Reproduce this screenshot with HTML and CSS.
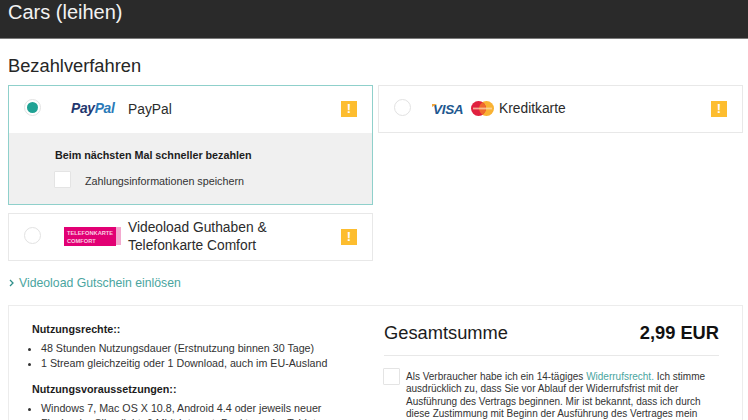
FILE: index.html
```html
<!DOCTYPE html>
<html lang="de">
<head>
<meta charset="utf-8">
<title>Cars (leihen)</title>
<link rel="stylesheet" href="styles.css">
</head>
<body>
<header class="top"><h1 class="top-title">Cars (leihen)</h1></header>
<main class="page">
  <h2 class="section-title">Bezahlverfahren</h2>
  <div class="methods">
    <div class="method-col">
      <section class="card card-active">
        <div class="row row-paypal">
          <span class="radio radio-on"></span>
          <span class="logo logo-paypal"><span class="pay">Pay</span><span class="pal">Pal</span></span>
          <span class="label">PayPal</span>
          <span class="warn">!</span>
        </div>
        <div class="extra">
          <div class="extra-title">Beim nächsten Mal schneller bezahlen</div>
          <label class="extra-check"><span class="check"></span><span class="extra-check-text">Zahlungsinformationen speichern</span></label>
        </div>
      </section>
      <section class="card">
        <div class="row row-tk">
          <span class="radio"></span>
          <span class="logo logo-tk">
            <span class="tk-back"></span>
            <span class="tk-front">TELEFONKARTE<br>COMFORT</span>
          </span>
          <span class="label">Videoload Guthaben &amp;<br>Telefonkarte Comfort</span>
          <span class="warn">!</span>
        </div>
      </section>
    </div>
    <div class="method-col">
      <section class="card">
        <div class="row row-card">
          <span class="radio"></span>
          <span class="logo logo-cards">
            <span class="visa">VISA</span>
            <svg class="mc" width="23" height="15" viewBox="0 0 23 15" aria-hidden="true">
              <circle cx="15.5" cy="7.5" r="7.5" fill="#f9b233"/>
              <circle cx="7.5" cy="7.5" r="7.5" fill="#e0213f"/>
              <path d="M11.5 1.2a7.5 7.5 0 0 1 0 12.6a7.5 7.5 0 0 1 0-12.6z" fill="#ef6a2b"/>
              <rect x="2" y="6.6" width="19" height="1.8" fill="#fbd9b0" opacity=".75"/>
            </svg>
          </span>
          <span class="label">Kreditkarte</span>
          <span class="warn">!</span>
        </div>
      </section>
    </div>
  </div>
  <a class="voucher" href="#"><svg class="chev" width="5" height="8" viewBox="0 0 5 8" aria-hidden="true"><path d="M1 1l3 3-3 3" fill="none" stroke="#2f8f8a" stroke-width="1.3"/></svg>Videoload Gutschein einlösen</a>
  <section class="summary">
    <div class="terms">
      <h3 class="terms-title">Nutzungsrechte::</h3>
      <ul class="terms-list">
        <li>48 Stunden Nutzungsdauer (Erstnutzung binnen 30 Tage)</li>
        <li>1 Stream gleichzeitig oder 1 Download, auch im EU-Ausland</li>
      </ul>
      <h3 class="terms-title">Nutzungsvoraussetzungen::</h3>
      <ul class="terms-list">
        <li>Windows 7, Mac OS X 10.8, Android 4.4 oder jeweils neuer</li>
        <li>Flash oder Silverlight, 6 Mbit Internet, Desktop oder Tablet</li>
      </ul>
    </div>
    <div class="total">
      <div class="total-head"><span class="total-label">Gesamtsumme</span><span class="total-price">2,99 EUR</span></div>
      <div class="consent">
        <span class="check"></span>
        <p class="consent-text">Als Verbraucher habe ich ein 14-tägiges <a class="inline-link" href="#">Widerrufsrecht.</a> Ich stimme ausdrücklich zu, dass Sie vor Ablauf der Widerrufsfrist mit der Ausführung des Vertrags beginnen. Mir ist bekannt, dass ich durch diese Zustimmung mit Beginn der Ausführung des Vertrages mein Widerrufsrecht verliere.</p>
      </div>
    </div>
  </section>
</main>
</body>
</html>
```
FILE: styles.css
```css
* { box-sizing: border-box; }
html, body { margin: 0; height: 420px; overflow: hidden; background: #fff; }
body { font-family: "Liberation Sans", Arial, sans-serif; color: #262626; }
.top { height: 39px; background: #2a2a2a; border-bottom: 1px solid #7a7a7a; padding-left: 8px; }
.top-title { margin: 0; font-size: 20px; font-weight: 400; line-height: 24px; color: #f2f2f2; }
.page { padding: 0 5px 0 8px; }
.section-title { margin: 0; padding-top: 16px; height: 46px; font-size: 18.3px; font-weight: 400; line-height: 22px; color: #262626; }
.methods { display: grid; grid-template-columns: 365px 365px; column-gap: 5px; align-items: start; }
.method-col { display: flex; flex-direction: column; gap: 8px; }
.card { border: 1px solid #e8e8e8; background: #fff; }
.card-active { border-color: #8fd0cb; }
.row { display: flex; align-items: center; position: relative; height: 46px; }
.row-paypal { height: 47px; }
.radio { flex: none; width: 17px; height: 17px; margin: -4px 0 0 15px; border-radius: 50%; border: 1px solid #e2e2e2; background: #fff; display: flex; align-items: center; justify-content: center; }
.radio-on::after { content: ""; width: 11px; height: 11px; border-radius: 50%; background: #20a294; }
.logo { flex: none; display: flex; align-items: center; }
.logo-paypal { margin: -3px 0 0 30px; width: 57px; font-size: 13.8px; font-weight: 700; font-style: italic; letter-spacing: -.3px; }
.pay { color: #22376f; }
.pal { color: #2a7ab8; }
.label { font-size: 13.8px; line-height: 18px; color: #2b2b2b; }
.row-tk .label { margin-top: -1px; }
.warn { position: absolute; right: 15px; top: 50%; margin-top: -8px; width: 16px; height: 16px; background: #fdbd2f; color: #fff; font-size: 13px; font-weight: 700; line-height: 16px; text-align: center; }
.row-paypal .warn { margin-top: -9px; }
.extra { height: 71px; background: #f0f0f0; padding: 15px 0 0 46px; }
.extra-title { font-size: 10.75px; font-weight: 700; line-height: 14px; color: #1c1c1c; }
.extra-check { display: flex; align-items: center; gap: 14px; margin: 9px 0 0 -1px; font-size: 10.75px; color: #333; }
.extra-check-text { padding-top: 2px; }
.check { flex: none; display: block; width: 17px; height: 17px; background: #fff; border: 1px solid #e4e4e4; border-radius: 1px; }
.logo-tk { position: relative; margin: -2px 0 0 23px; width: 64px; height: 20px; }
.tk-back { position: absolute; left: 5px; top: 1px; width: 52px; height: 18px; background: #f3a9cf; }
.tk-front { position: relative; display: block; width: 52px; height: 19px; background: #e20074; color: #f8cfe2; font-size: 5.7px; font-weight: 700; line-height: 8px; padding: 2px 0 0 3px; white-space: nowrap; overflow: hidden; }
.row-card .logo-cards { margin-left: 22px; gap: 8px; width: 66px; }
.visa { position: relative; font-size: 13.5px; font-weight: 700; font-style: italic; color: #22588f; letter-spacing: -.3px; }
.visa::before { content: ""; position: absolute; left: -1px; top: 2px; border-top: 3px solid #f2a73b; border-right: 5px solid transparent; }
.mc { flex: none; margin-top: -1px; }
.voucher { display: flex; align-items: center; gap: 5px; margin-top: 13px; height: 18px; font-size: 12.25px; color: #4aa5a0; text-decoration: none; padding-left: 1px; }
.chev { flex: none; }
.summary { display: flex; margin-top: 13px; border: 1px solid #ececec; width: 735px; height: 200px; }
.terms { width: 375px; flex: none; padding: 16px 0 0 23px; color: #333; }
.terms-title { margin: 0; font-size: 10.75px; font-weight: 700; line-height: 14px; color: #1c1c1c; }
.terms-list { margin: 4.5px 0 10.5px; padding: 0 0 0 9px; font-size: 10.7px; line-height: 15.5px; }
.total { flex: 1; padding: 13px 23px 0 0; }
.total-head { display: flex; justify-content: space-between; align-items: center; height: 37px; border-bottom: 1px solid #e8e8e8; padding-bottom: 8px; color: #1c1c1c; font-size: 18.3px; }
.total-price { font-weight: 700; color: #111; }
.consent { display: flex; gap: 6px; margin: 12px 0 0 -1px; }
.consent-text { margin: 0; padding-top: 2.5px; font-size: 10px; line-height: 12.5px; color: #333; }
.inline-link { color: #4aa5a0; text-decoration: none; }
```
